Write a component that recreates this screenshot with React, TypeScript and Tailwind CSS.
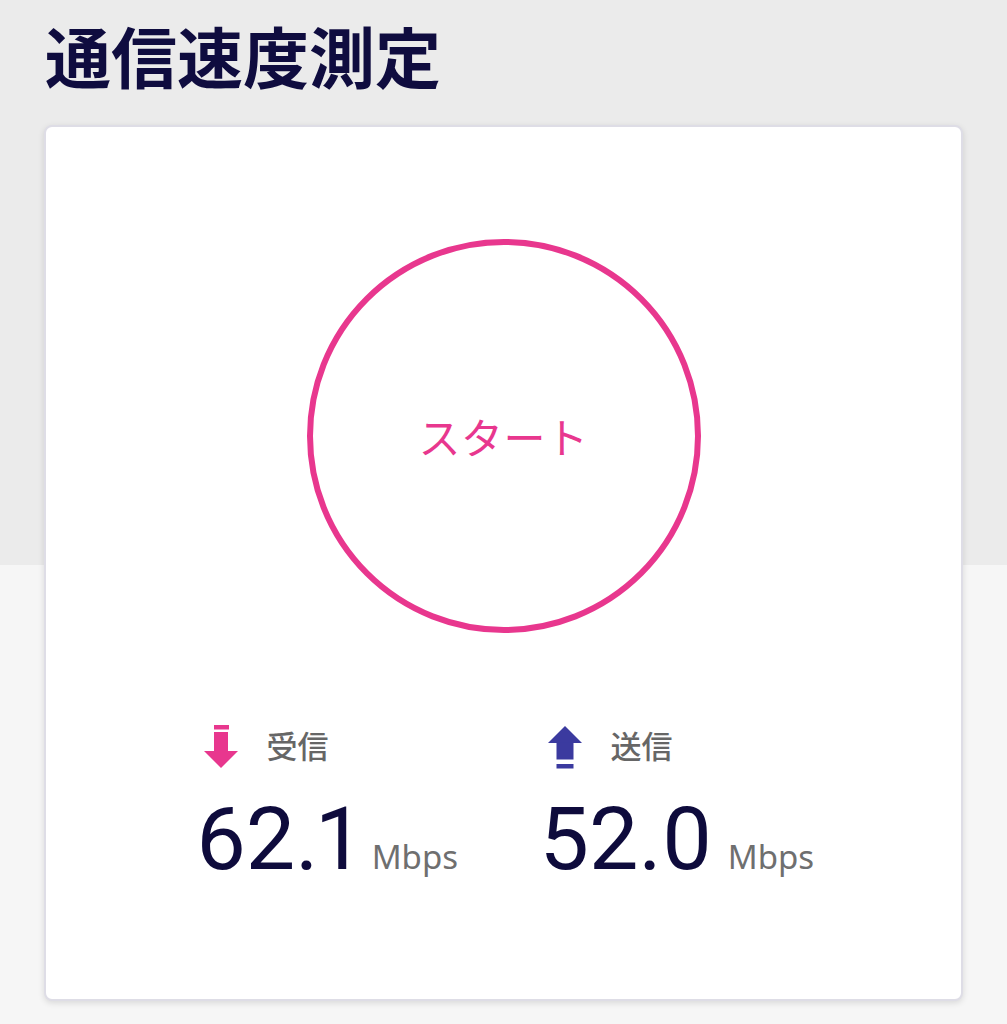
import React from 'react';

const jp = "font-['Noto_Sans_CJK_JP','Noto_Sans',sans-serif]";

const DownIcon = () => (
  <svg width="36" height="44" viewBox="0 0 36 44" className="block">
    <rect x="11" y="0" width="15" height="4.5" fill="#e8378e" />
    <rect x="11" y="7" width="14" height="19" fill="#e8378e" />
    <polygon points="1,26 35,26 18,43" fill="#e8378e" />
  </svg>
);

const UpIcon = () => (
  <svg width="36" height="44" viewBox="0 0 36 44" className="block">
    <polygon points="18,1 35,18 1,18" fill="#3b3a9f" />
    <rect x="9.5" y="17.5" width="17" height="17" fill="#3b3a9f" />
    <rect x="9.5" y="39" width="17" height="4.5" fill="#3b3a9f" />
  </svg>
);

const Stat = ({ icon, label, value, width }: { icon: React.ReactNode; label: string; value: string; width?: string }) => (
  <div className={width}>
    <div className="flex items-center pl-[7px]">
      {icon}
      <span className={`${jp} ml-[28px] -mt-[5px] text-[31px] leading-none font-medium text-[#666666]`}>{label}</span>
    </div>
    <div className="mt-[26px] flex items-baseline">
      <span className="font-['Roboto',sans-serif] proportional-nums text-[88px] leading-none text-[#0e0b3c]">{value}</span>
      <span className="ml-[15px] font-['Noto_Sans',sans-serif] text-[33px] leading-none text-[#6f6f6f]">Mbps</span>
    </div>
  </div>
);

export default function App() {
  return (
    <div className="min-h-screen w-full bg-[linear-gradient(to_bottom,#ebebeb_565px,#f6f6f6_565px)] px-[44px] pt-[21px] pb-[22px]">
      <h1 className={`${jp} text-[66px] leading-none font-bold text-[#0f0c3f] ml-[1px]`}>通信速度測定</h1>
      <div className="mt-[38px] h-[876px] rounded-[8px] border-2 border-[#dedde6] bg-white shadow-[0_2px_6px_rgba(0,0,0,0.12)] pt-[112px]">
        <div className="flex justify-center">
          <div className="flex h-[394px] w-[394px] items-center justify-center rounded-full border-[6px] border-[#e8378e]">
            <span className={`${jp} text-[42px] leading-none text-[#e8378e] tracking-[0.5px]`}>スタート</span>
          </div>
        </div>
        <div className="mt-[92px] flex justify-center pl-[8px]">
          <Stat icon={<DownIcon />} label="受信" value="62.1" width="w-[344px]" />
          <Stat icon={<UpIcon />} label="送信" value="52.0" width="w-[280px]" />
        </div>
      </div>
    </div>
  );
}
